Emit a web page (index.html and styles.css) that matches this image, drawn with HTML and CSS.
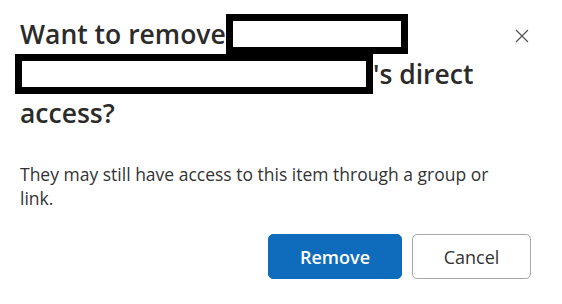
FILE: index.html
```html
<!DOCTYPE html>
<html lang="en">
<head>
<meta charset="utf-8">
<title>Remove access</title>
<link rel="stylesheet" href="styles.css">
</head>
<body>
<div class="dialog">
  <div class="header">
    <h2 class="title">Want to remove<span class="redact redact-a"></span> <span class="redact redact-b"></span>'s direct access?</h2>
    <button class="close" aria-label="Close">
      <svg width="14" height="14" viewBox="0 0 14 14"><path d="M1 1 L13 13 M13 1 L1 13" stroke="#555" stroke-width="1.3" fill="none"/></svg>
    </button>
  </div>
  <p class="message">They may still have access to this item through a group or link.</p>
  <div class="actions">
    <button class="btn btn-primary">Remove</button>
    <button class="btn btn-secondary">Cancel</button>
  </div>
</div>
</body>
</html>
```
FILE: styles.css
```css
html, body {
  margin: 0;
  background: #ffffff;
}
body {
  font-family: "Open Sans", "Noto Sans", sans-serif;
  color: #242424;
}
.dialog {
  width: 562px;
  height: 304px;
  box-sizing: border-box;
  padding: 0 31px 0 20px;
}
.header {
  display: flex;
  align-items: flex-start;
}
.title {
  flex: 1;
  margin: 14px 0 0;
  font-size: 26.5px;
  font-weight: 600;
  line-height: 39px;
  color: #2b2b2b;
}
.redact {
  display: inline-block;
  box-sizing: border-box;
  height: 40px;
  border: 7px solid #000;
  background: #fff;
  vertical-align: -10px;
  line-height: 0;
}
.redact-a {
  width: 182px;
}
.redact-b {
  width: 358px;
  margin-left: -5px;
}
.close {
  flex: none;
  margin: 22px -5px 0 0;
  padding: 0;
  width: 28px;
  height: 28px;
  border: none;
  background: none;
  display: flex;
  align-items: center;
  justify-content: center;
}
.message {
  margin: 29px 20px 0 0;
  font-size: 17.5px;
  line-height: 24px;
  color: #333;
}
.actions {
  display: flex;
  justify-content: flex-end;
  gap: 10px;
  margin-top: 24px;
}
.btn {
  height: 45px;
  border-radius: 5px;
  font-family: "Open Sans", "Noto Sans", sans-serif;
  font-size: 18px;
  box-sizing: border-box;
}
.btn-primary {
  width: 134px;
  background: #0f6cbd;
  border: 1px solid #0f6cbd;
  color: #fff;
  font-weight: 600;
}
.btn-secondary {
  width: 119px;
  background: #fff;
  border: 1px solid #a6a6a6;
  color: #333;
}
```
